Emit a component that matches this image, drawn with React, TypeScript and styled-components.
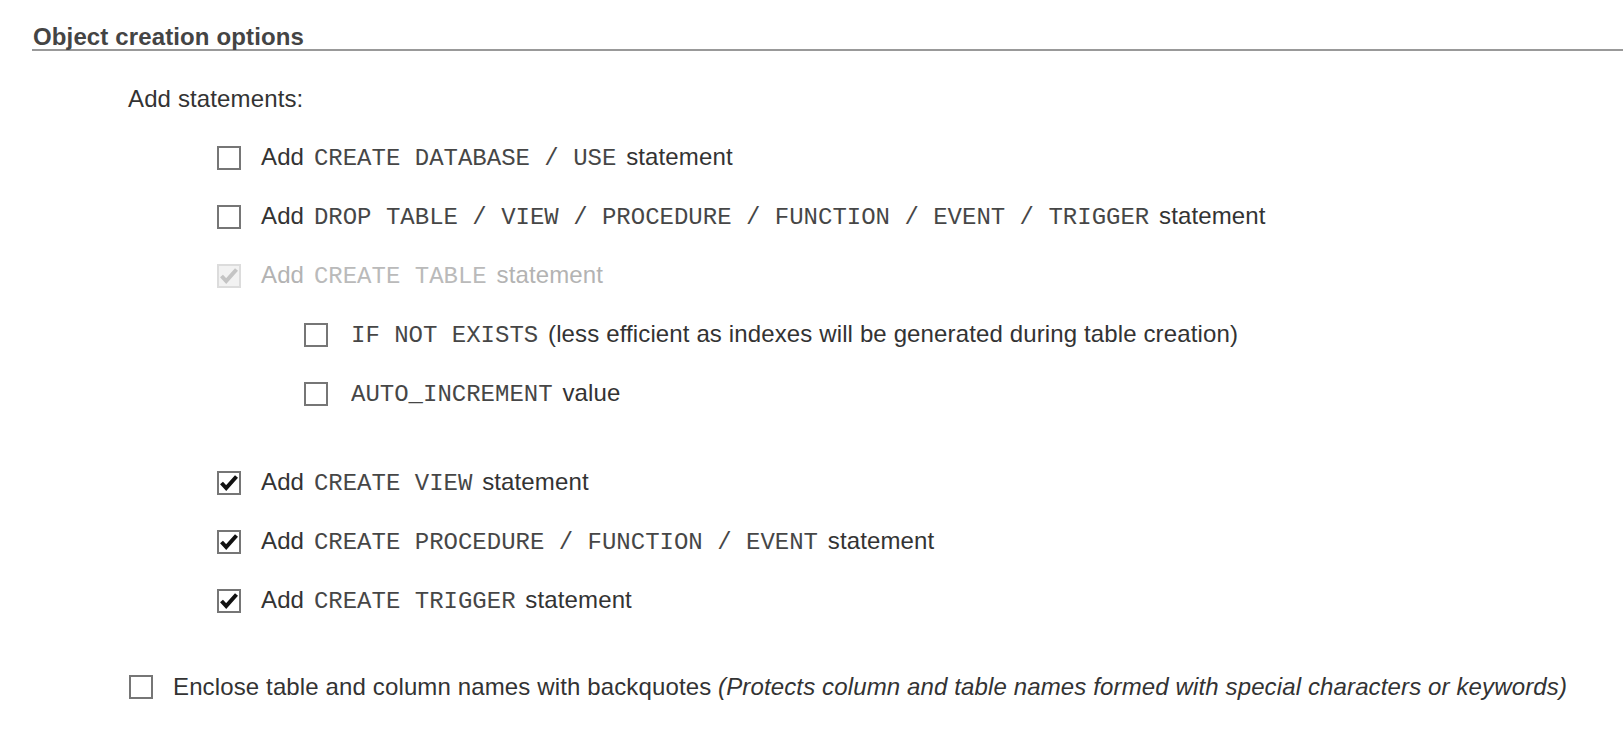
import styled, { createGlobalStyle } from 'styled-components';

type Level = 0 | 1 | 2;

type RowProps = {
  $level: Level;
  $gapBefore?: number;
};

type BoxProps = {
  $checked?: boolean;
  $disabled?: boolean;
};

const GlobalStyle = createGlobalStyle`
  html, body {
    margin: 0;
    padding: 0;
    background: #ffffff;
  }

  body {
    font-family: 'Liberation Sans', Arial, sans-serif;
    color: #333333;
    letter-spacing: 0.13px;
  }
`;

const Page = styled.div`
  padding-left: 32px;
`;

const SectionTitle = styled.h3`
  margin: 0;
  padding-top: 24px;
  padding-left: 1px;
  font-size: 24px;
  font-weight: bold;
  line-height: 25px;
  color: #444444;
  border-bottom: 2px solid #999999;
`;

const OptionList = styled.div`
  display: flex;
  flex-direction: column;
  margin-top: 18px;
`;

const indent = {
  0: 97,
  1: 185,
  2: 272,
};

const SubTitle = styled.div`
  height: 59px;
  display: flex;
  align-items: center;
  padding-left: 96px;
  font-size: 24px;
`;

const Row = styled.label<RowProps>`
  height: 59px;
  display: flex;
  align-items: center;
  padding-left: ${(p) => indent[p.$level]}px;
  margin-top: ${(p) => p.$gapBefore ?? 0}px;
  font-size: 24px;
  white-space: nowrap;
`;

const Box = styled.span<BoxProps>`
  flex: none;
  width: 24px;
  height: 24px;
  box-sizing: border-box;
  margin-right: 20px;
  border: 2px solid ${(p) => (p.$disabled ? '#dcdcdc' : '#767676')};
  background: ${(p) => (p.$disabled ? '#f2f2f2' : '#ffffff')};
  color: ${(p) => (p.$disabled ? '#c4c4c4' : '#111111')};
  display: flex;
  align-items: center;
  justify-content: center;
`;

const Text = styled.span<{ $disabled?: boolean }>`
  color: ${(p) => (p.$disabled ? '#b3b3b3' : '#333333')};
`;

const Code = styled.code`
  font-family: 'Liberation Mono', 'Courier New', monospace;
  font-size: 24px;
  letter-spacing: 0;
  margin: 0 3px;
  opacity: 0.9;
`;

const Note = styled.em`
  font-style: italic;
`;

function Checkbox({ checked, disabled }: { checked?: boolean; disabled?: boolean }) {
  return (
    <Box $checked={checked} $disabled={disabled}>
      {checked && (
        <svg width="20" height="20" viewBox="0 0 20 20">
          <polyline
            points="2.5,10 7.2,15 17.5,3.5"
            fill="none"
            stroke="currentColor"
            strokeWidth="4"
            strokeLinejoin="miter"
          />
        </svg>
      )}
    </Box>
  );
}

type Option = {
  level: Level;
  checked?: boolean;
  disabled?: boolean;
  gapBefore?: number;
  content: React.ReactNode;
};

const options: Option[] = [
  {
    level: 1,
    content: (
      <>
        Add <Code>CREATE DATABASE / USE</Code> statement
      </>
    ),
  },
  {
    level: 1,
    content: (
      <>
        Add <Code>DROP TABLE / VIEW / PROCEDURE / FUNCTION / EVENT / TRIGGER</Code> statement
      </>
    ),
  },
  {
    level: 1,
    checked: true,
    disabled: true,
    content: (
      <>
        Add <Code>CREATE TABLE</Code> statement
      </>
    ),
  },
  {
    level: 2,
    content: (
      <>
        <Code>IF NOT EXISTS</Code> (less efficient as indexes will be generated during table creation)
      </>
    ),
  },
  {
    level: 2,
    content: (
      <>
        <Code>AUTO_INCREMENT</Code> value
      </>
    ),
  },
  {
    level: 1,
    checked: true,
    gapBefore: 30,
    content: (
      <>
        Add <Code>CREATE VIEW</Code> statement
      </>
    ),
  },
  {
    level: 1,
    checked: true,
    content: (
      <>
        Add <Code>CREATE PROCEDURE / FUNCTION / EVENT</Code> statement
      </>
    ),
  },
  {
    level: 1,
    checked: true,
    content: (
      <>
        Add <Code>CREATE TRIGGER</Code> statement
      </>
    ),
  },
  {
    level: 0,
    gapBefore: 27,
    content: (
      <>
        Enclose table and column names with backquotes{' '}
        <Note>(Protects column and table names formed with special characters or keywords)</Note>
      </>
    ),
  },
];

export default function App() {
  return (
    <>
      <GlobalStyle />
      <Page>
        <SectionTitle>Object creation options</SectionTitle>
        <OptionList>
          <SubTitle>Add statements:</SubTitle>
          {options.map((opt, i) => (
            <Row key={i} $level={opt.level} $gapBefore={opt.gapBefore}>
              <Checkbox checked={opt.checked} disabled={opt.disabled} />
              <Text $disabled={opt.disabled}>{opt.content}</Text>
            </Row>
          ))}
        </OptionList>
      </Page>
    </>
  );
}
